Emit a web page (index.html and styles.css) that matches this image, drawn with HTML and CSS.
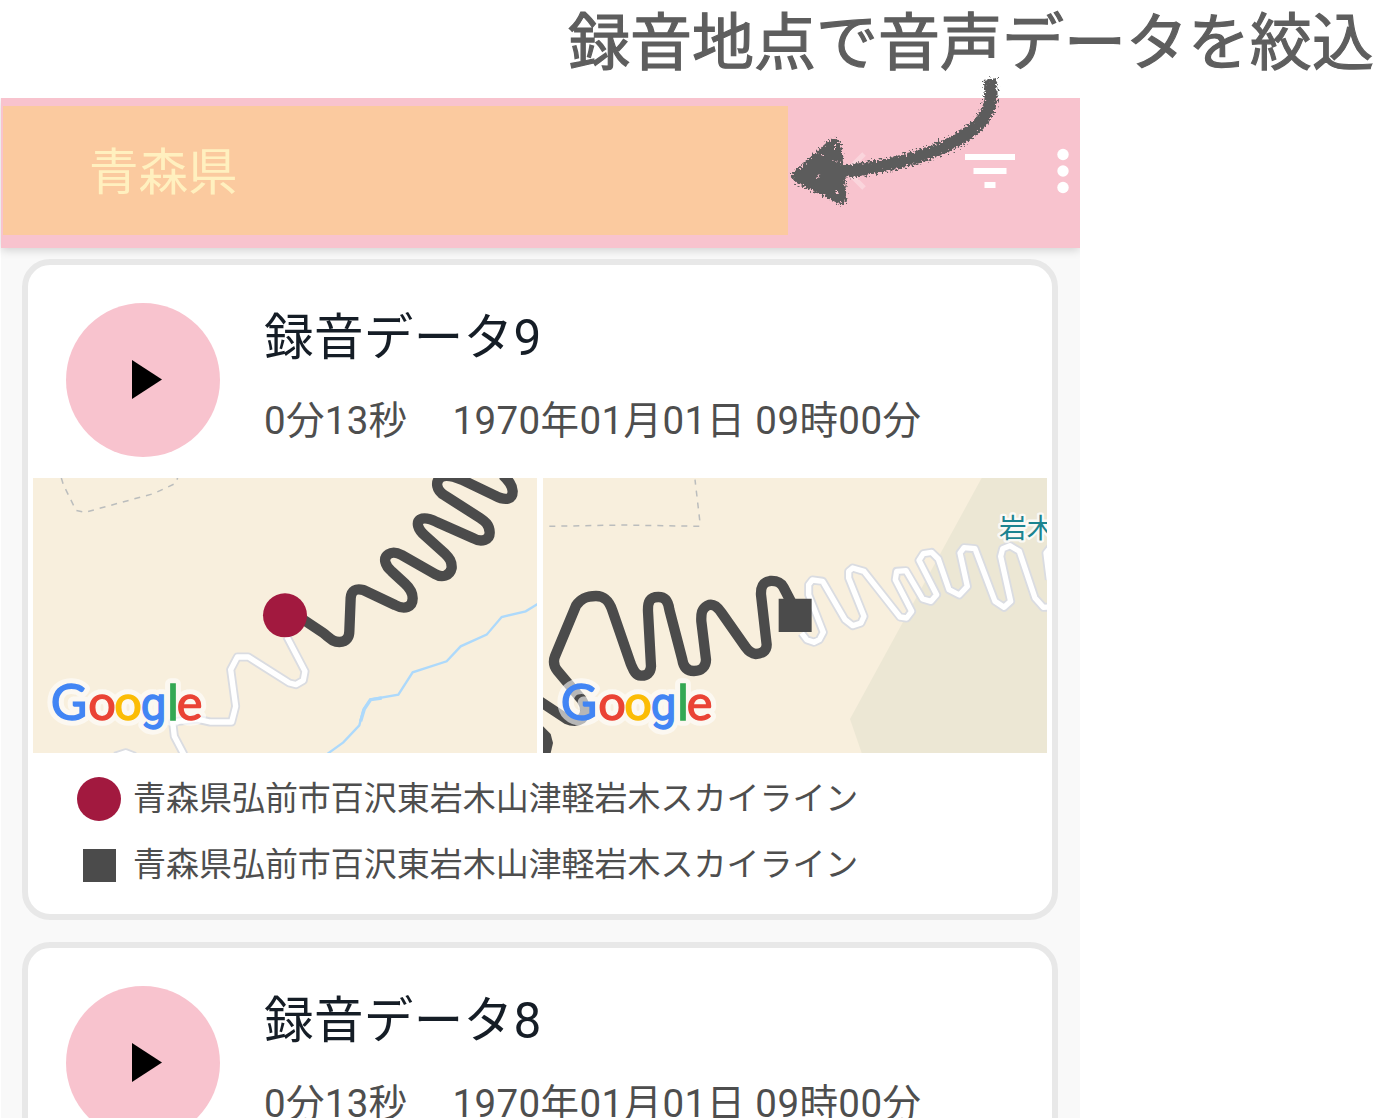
FILE: index.html
```html
<!DOCTYPE html>
<html lang="ja">
<head>
<meta charset="utf-8">
<title>録音データ</title>
<link rel="stylesheet" href="styles.css">
</head>
<body>
<svg class="defs" width="0" height="0" aria-hidden="true">
  <defs>
    <g id="google">
      <text class="logo" y="751"><tspan class="blue cap" x="62">G</tspan><tspan class="red" x="175">o</tspan><tspan class="yellow" x="253">o</tspan><tspan class="blue geo" x="332">g</tspan><tspan class="green" x="412">l</tspan><tspan class="red" x="440">e</tspan></text>
    </g>
  </defs>
</svg>
<h1 class="caption">録音地点で音声データを絞込</h1>
<main class="phone">
  <header class="bar">
    <div class="query">青森県</div>
    <div class="actions">
      <svg class="close" width="22" height="38" viewBox="0 0 22 38"><path d="M20 2 3 19 20 36"/></svg>
      <svg class="filter" width="50" height="34" viewBox="0 0 50 34"><path d="M0 0h50v6H0zM8.500 14h33v6h-33zM19.500 28h11v6h-11z"/></svg>
      <svg class="more" width="12" height="46" viewBox="0 0 12 46"><circle cx="6" cy="6.500" r="5.700"/><circle cx="6" cy="23" r="5.700"/><circle cx="6" cy="39.500" r="5.700"/></svg>
    </div>
  </header>
  <section class="list">
    <article class="card">
      <div class="head">
        <button class="play" aria-label="再生"><svg width="30" height="39" viewBox="0 0 30 39"><path d="M0 0 30 19.500 0 39z"/></svg></button>
        <div class="info">
          <h2>録音データ9</h2>
          <p><span>0分13秒</span><span class="date">1970年01月01日 09時00分</span></p>
        </div>
      </div>
      <div class="maps">
        <svg class="map" viewBox="9 25 1512 825">
          <path class="border" d="M94 25 100 45 138 122 165 128 370 72 435 42 443 25"/>
          <g class="road">
            <path id="r1" d="M770 500 825 605 820 632 798 645 778 640 655 562H622L602 600 617 710 605 757H540L500 748 428 757 433 800 462 855M255 860 287 849 315 860"/>
            <use href="#r1" class="lane"/>
          </g>
          <g transform="translate(750 0)">
            <path class="river" d="M143 852 190 818 238 767 250 720 270 690 355 675 398 608 500 575 542 530 620 495 665 442 737 425 775 402"/>
            <path class="river wide" d="M242 755 253 718 272 690 305 685"/>
            <path class="track" d="M40 430 130 490C155 510 160 517 178 517C202 517 208 500 208 485L212 385C214 362 228 355 250 361L345 406C375 422 398 412 398 386C398 368 388 354 375 342L335 305C315 288 308 265 325 254C338 245 350 248 365 256L465 313C485 325 510 320 515 295C516 275 508 265 495 252L435 198C412 178 408 158 421 149C435 142 450 147 470 157L580 206C605 220 630 210 629 188C628 165 615 155 600 145L495 78C468 62 465 36 482 23C495 15 520 20 545 30L645 78C680 96 698 88 698 65C697 45 685 32 668 16"/>
          </g>
          <circle class="start" cx="765" cy="437" r="66"/>
          <use href="#google" class="halo"/><use href="#google" class="face"/>
        </svg>
        <svg class="map" viewBox="9 25 1512 825">
          <path class="park" d="M1325 25H1521V850H965L930 748z"/>
          <path class="border" d="M28 170 250 166 478 170 479 150 465 30"/>
          <g class="road" transform="translate(720 0)">
            <path id="r2" d="M65 490 80 510 102 518 118 510 130 488 86 375V345L97 331 128 335 195 450 218 468 243 460 252 440 206 325V305L218 295 252 305 360 442 380 445 395 425 346 330 350 305 378 303 428 388 453 395 470 375 417 272 430 252 455 248 475 268 507 360 538 376 562 350 540 250 552 234 585 237 645 395 672 413 692 395 662 260 668 237 690 228 718 245 765 385 790 413 815 412M818 225 798 250 808 330"/>
            <use href="#r2" class="lane"/>
          </g>
          <path class="track" d="M755 400 730 352C720 334 705 333 690 334C668 338 662 350 663 375L680 525C680 545 665 552 647 553C630 552 622 540 615 530L545 430C530 408 515 402 502 408C485 418 483 430 484 455L498 570C498 590 485 604 462 604C440 604 430 590 427 570L388 420C385 395 375 382 355 382C330 382 323 395 324 425L333 590C332 610 320 619 303 618C285 617 280 600 272 582L218 425C208 395 195 379 168 379C135 379 120 390 108 408L45 560C38 578 42 590 52 603L125 690C140 715 138 735 125 747C110 757 95 755 80 748L-5 692"/>
          <path class="blob" d="M9 770 32 793 39 820 32 850H9z"/>
          <path class="end" d="M716 387h99v100h-99z"/>
          <text class="place" x="1377" y="205">岩木</text>
          <use href="#google" class="halo"/><use href="#google" class="face"/>
        </svg>
      </div>
      <ul class="legend">
        <li><i class="dot"></i>青森県弘前市百沢東岩木山津軽岩木スカイライン</li>
        <li><i class="square"></i>青森県弘前市百沢東岩木山津軽岩木スカイライン</li>
      </ul>
    </article>
    <article class="card">
      <div class="head">
        <button class="play" aria-label="再生"><svg width="30" height="39" viewBox="0 0 30 39"><path d="M0 0 30 19.500 0 39z"/></svg></button>
        <div class="info">
          <h2>録音データ8</h2>
          <p><span>0分13秒</span><span class="date">1970年01月01日 09時00分</span></p>
        </div>
      </div>
    </article>
  </section>
</main>
<svg class="arrow" width="230" height="150" viewBox="780 70 230 150" aria-hidden="true">
  <defs>
    <filter id="chalk" x="-10%" y="-10%" width="120%" height="120%">
      <feTurbulence type="fractalNoise" baseFrequency=".5" numOctaves="3" seed="4" result="n"/>
      <feDisplacementMap in="SourceGraphic" in2="n" scale="11" xChannelSelector="R" yChannelSelector="G"/>
    </filter>
  </defs>
  <g filter="url(#chalk)">
    <path class="shaft" d="M990 79C993 100 990 112 979 124C950 151 900 166 838 172"/>
    <path class="tip" d="M791 176 831 140Q840 138 841 149L842 165 846 198Q845 206 838 202L797 182z"/>
    <path class="grain" d="M835 145v4M817 176l2 2M837 191l1 3M836 161l1 2M822 156l2-1"/>
  </g>
</svg>
</body>
</html>
```

FILE: styles.css
```css
* { box-sizing: border-box; }
body {
  margin: 0;
  height: 1120px;
  position: relative;
  overflow: hidden;
  background: #fff;
  font-family: Roboto, "Noto Sans CJK JP", sans-serif;
}
h1, h2, p, ul { margin: 0; padding: 0; font-weight: 400; }
svg { display: block; }
.defs { position: absolute; }

.caption {
  height: 98px;
  padding-left: 568px;
  font-family: "Noto Sans CJK JP", sans-serif;
  font-size: 62px;
  line-height: 77px;
  white-space: nowrap;
  color: #5e5e5e;
  -webkit-text-stroke: 1.2px #5e5e5e;
}

.phone {
  width: 1080px;
  height: 1020px;
  padding-left: 1px;
  overflow: hidden;
}
.bar {
  position: relative;
  display: flex;
  justify-content: space-between;
  height: 149.500px;
  padding: 8px 11px 12.500px 2px;
  background: #f8c3ce;
  box-shadow: 0 2px 9px rgba(0, 0, 0, .17);
}
.query {
  width: 785px;
  padding-left: 86px;
  background: #fbca9f;
  color: #fff0bf;
  font-size: 49.500px;
  line-height: 134px;
}
.actions { display: flex; align-items: center; }
.close { margin-right: 99px; fill: none; stroke: #fff; stroke-width: 5; opacity: .3; }
.filter { margin-right: 42px; fill: #fff; }
.more { fill: #fff; }

.list {
  display: flex;
  flex-direction: column;
  gap: 22px;
  height: 870px;
  padding: 11px 22px 0 21px;
  background: #f9f9f9;
}
.card {
  flex: none;
  height: 661px;
  border: 6px solid #e8e8e8;
  border-radius: 28px;
  background: #fff;
}
.head { display: flex; gap: 44px; padding: 38px 38px 0; }
.play {
  display: flex;
  align-items: center;
  justify-content: center;
  width: 154px;
  height: 154px;
  padding: 0 0 0 7px;
  border: 0;
  border-radius: 50%;
  background: #f8c3ce;
}
h2 { font-size: 49.500px; line-height: 70px; letter-spacing: .4px; color: #151d26; }
.info p {
  display: flex;
  gap: 45px;
  margin-top: 17px;
  font-size: 38.500px;
  line-height: 61px;
  letter-spacing: .3px;
  white-space: nowrap;
  color: #4e4e4e;
}
.info .date { letter-spacing: .4px; }
.maps { display: flex; gap: 6px; padding: 21.500px 5px 0; }
.map { width: 504px; height: 275px; background: #f8efdd; }
.border { fill: none; stroke: #bbbdbd; stroke-width: 4.500; stroke-dasharray: 18 18; }
.park { fill: #ece7d4; }
.road { fill: none; stroke: #dadce1; stroke-width: 27; stroke-linejoin: round; }
.lane { stroke: #fff; stroke-width: 16; }
.river { fill: none; stroke: #add9fb; stroke-width: 7; }
.river.wide { stroke-width: 10; }
.track { fill: none; stroke: #4b4b4b; stroke-width: 31; stroke-linejoin: round; }
.blob, .end { fill: #4b4b4b; }
.start { fill: #a2193f; }
.place {
  font: 83px "Noto Sans CJK JP", sans-serif;
  fill: #1c8490;
  stroke: #fff;
  stroke-opacity: .8;
  stroke-width: 14;
  stroke-linejoin: round;
  paint-order: stroke;
}
.logo { font-family: Lato, sans-serif; font-size: 146px; font-weight: 400; }
.cap { font-size: 150px; }
.geo { font-family: Roboto, sans-serif; font-size: 136px; }
.blue { fill: #4285f4; stroke: var(--edge, #4285f4); }
.red { fill: #ea4335; stroke: var(--edge, #ea4335); }
.yellow { fill: #fbbc05; stroke: var(--edge, #fbbc05); }
.green { fill: #34a853; stroke: var(--edge, #34a853); }
.halo { --edge: #fff; stroke-width: 34; stroke-linejoin: round; opacity: .6; }
.face { stroke-width: 4; }

.legend { padding: 13px 0 0 49px; list-style: none; }
.legend li {
  display: flex;
  align-items: center;
  gap: 12px;
  height: 66px;
  font-size: 33px;
  line-height: 68px;
  letter-spacing: -.03px;
  white-space: nowrap;
  color: #4e4e4e;
}
.dot { width: 44px; height: 44px; border-radius: 50%; background: #a2193f; }
.square { width: 33px; height: 33px; margin: 0 5.500px; background: #4b4b4b; }

.arrow { position: absolute; left: 780px; top: 70px; }
.shaft { fill: none; stroke: #5c5c5c; stroke-width: 13; }
.tip { fill: #5c5c5c; stroke: #5c5c5c; stroke-width: 2; stroke-linejoin: round; }
.grain { fill: none; stroke: #f8c3ce; stroke-width: 2; }
```
